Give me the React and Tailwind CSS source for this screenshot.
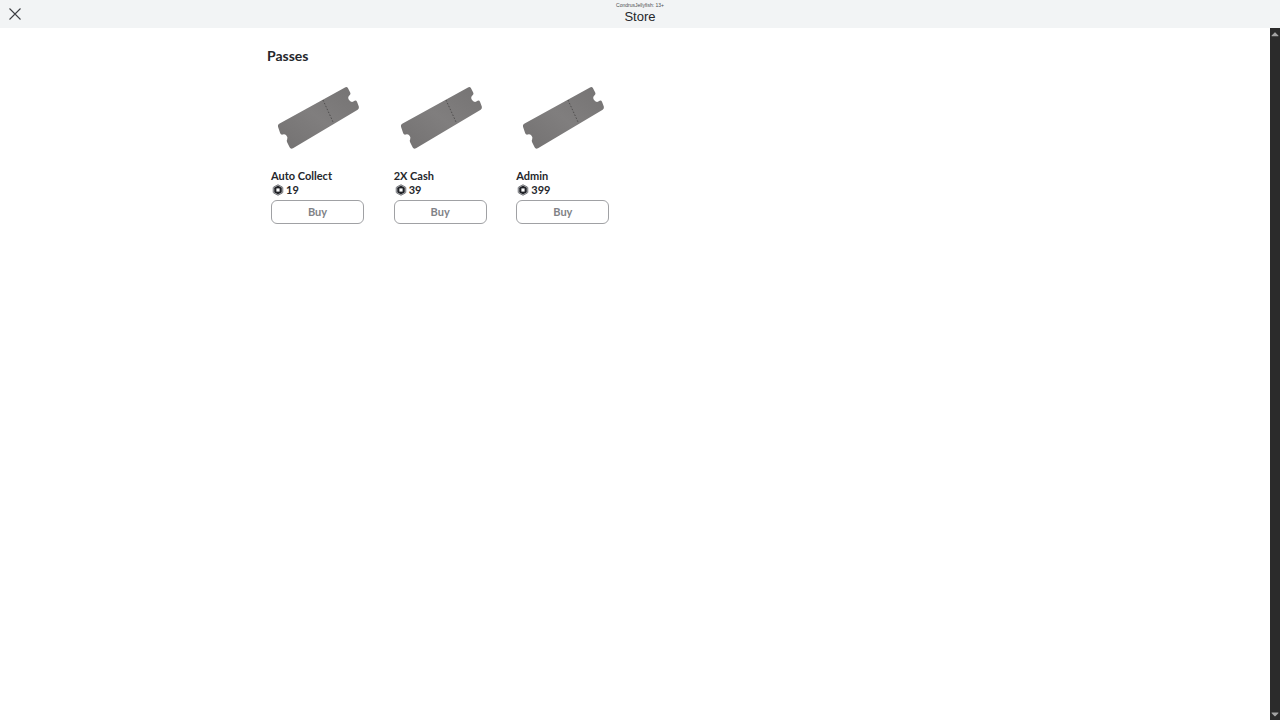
import { FaCaretUp, FaCaretDown } from 'react-icons/fa';

const passes = [
    { id: 'auto-collect', name: 'Auto Collect', price: 19 },
    { id: 'double-cash', name: '2X Cash', price: 39 },
    { id: 'admin', name: 'Admin', price: 399 },
];

const TicketImage = () => (
    <svg viewBox="0 0 92 92" className="h-[92px] w-[92px]" aria-hidden="true">
        <defs>
            <linearGradient id="ticket" x1="0" y1="1" x2="1" y2="0">
                <stop offset="0" stopColor="#737171" />
                <stop offset="0.5" stopColor="#807e7e" />
                <stop offset="1" stopColor="#757373" />
            </linearGradient>
        </defs>
        <path
            d="M74 15.4 Q76 14.4 77 16.3 L79.2 20.5 Q80 22 78.8 23 A3.7 3.7 0 0 0 83.6 28.8 Q85.2 28 86 29.8 L87.8 34.6 Q88.5 36.7 86.7 37.7 L22 76.2 Q19.8 77.5 18.6 75.3 L16 70 Q15.4 68.5 16.2 67.2 A3.6 3.6 0 0 0 11.6 62.6 Q9.9 63 9.2 61.2 L7 54.8 Q6.4 52.8 8.2 51.8 Z"
            fill="url(#ticket)"
        />
        <path d="M52 28 L62.5 51" stroke="#4b4949" strokeWidth="0.9" strokeDasharray="1.6 1.6" />
    </svg>
);

const RobuxIcon = () => (
    <svg viewBox="0 0 12 12" className="h-3 w-3" fill="none" aria-hidden="true">
        <path
            d="M6 0.7 L10.2 2.9 Q10.8 3.2 10.8 3.9 V8.1 Q10.8 8.8 10.2 9.1 L6 11.3 L1.8 9.1 Q1.2 8.8 1.2 8.1 V3.9 Q1.2 3.2 1.8 2.9 Z"
            fill="#b4b5b8"
            stroke="#66686d"
            strokeWidth="0.8"
            strokeLinejoin="round"
        />
        <path
            d="M6 1.8 L9.3 3.5 Q9.7 3.8 9.7 4.2 V7.8 Q9.7 8.2 9.3 8.5 L6 10.2 L2.7 8.5 Q2.3 8.2 2.3 7.8 V4.2 Q2.3 3.8 2.7 3.5 Z"
            fill="#1f2126"
        />
        <path d="M4.4 4.4 H7.6 V7.6 H4.4 Z" fill="#ffffff" />
    </svg>
);

const PassCard = ({ pass }) => (
    <li className="px-1">
        <TicketImage />
        <h3 className="mt-1 text-[11px] leading-4 font-bold whitespace-nowrap">{pass.name}</h3>
        <p className="flex h-3 items-center gap-0.5 pl-px text-[11px] leading-3 font-bold">
            <RobuxIcon />
            <span>{pass.price}</span>
        </p>
        <button
            type="button"
            aria-label={`Buy ${pass.name}`}
            className="mt-1 flex h-6 w-[93px] items-center justify-center rounded-md border border-[#a0a1a4] text-[11px] font-bold text-[#808286]"
        >
            Buy
        </button>
    </li>
);

const Header = () => (
    <header className="grid h-7 shrink-0 grid-cols-3 items-center bg-[#f2f4f5] font-['Liberation_Sans',Arial,sans-serif]">
        <button type="button" aria-label="Close" className="ml-2 h-4 w-4">
            <svg viewBox="0 0 16 16" className="h-4 w-4" stroke="#3c3e42" strokeWidth="1.1" aria-hidden="true">
                <path d="M1.5 2.5 L12.5 13.5 M12.5 2.5 L1.5 13.5" />
            </svg>
        </button>
        <div className="pb-0.5 text-center">
            <p className="text-[5px] leading-2 text-[#4c4e52]">CondrusJellyfish: 13+</p>
            <h1 className="text-[13px] leading-4 text-[#25272b]">Store</h1>
        </div>
    </header>
);

const App = () => {
    return (
        <div className="flex h-screen flex-col bg-white font-[Lato,sans-serif] text-[#25272c]">
            <Header />
            <div className="flex min-h-0 flex-1">
                <main className="min-w-0 flex-1 overflow-hidden">
                    <div className="mx-auto w-full max-w-[736px] pt-5">
                        <h2 className="text-sm leading-4 font-bold">Passes</h2>
                        <ul className="mt-2 grid grid-cols-6">
                            {passes.map((pass) => (
                                <PassCard key={pass.id} pass={pass} />
                            ))}
                        </ul>
                    </div>
                </main>

                {/* Scroll track */}
                <div className="flex w-2.5 shrink-0 flex-col items-center justify-between bg-[#2b2b2b] text-[#a3a3a3]">
                    <button type="button" aria-label="Scroll up">
                        <FaCaretUp className="h-3 w-2.5" />
                    </button>
                    <button type="button" aria-label="Scroll down">
                        <FaCaretDown className="h-3 w-2.5" />
                    </button>
                </div>
            </div>
        </div>
    );
};

export default App;
